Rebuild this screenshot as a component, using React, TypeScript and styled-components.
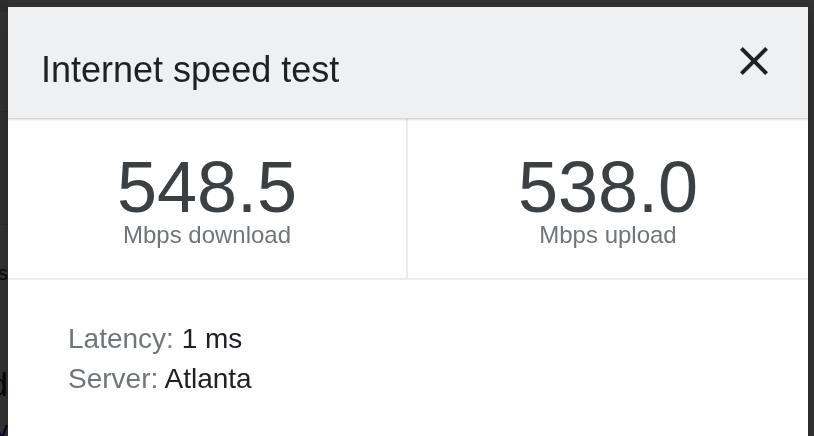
import React from "react";
import styled, { createGlobalStyle } from "styled-components";

const GlobalStyle = createGlobalStyle`
  html, body {
    margin: 0;
    padding: 0;
    background: #ffffff;
    overflow: hidden;
    font-family: "Liberation Sans", Arial, Helvetica, sans-serif;
  }
  * { box-sizing: border-box; }
`;

/* ---------- underlying page (only its left sliver is visible) ---------- */

const BehindPage = styled.div`
  width: 220px;
  margin-left: -212px;
  height: 436px;
  overflow: hidden;
  display: flex;
  flex-direction: column;
  text-align: right;
  white-space: nowrap;
  color: #202124;
`;

const BehindBar = styled.div<{ $h: number; $bg: string }>`
  height: ${(p) => p.$h}px;
  flex: 0 0 auto;
  background: ${(p) => p.$bg};
  border-bottom: 1px solid #e2e2e2;
`;

const BehindText = styled.div<{ $size: number; $top: number; $color?: string }>`
  margin-top: ${(p) => p.$top}px;
  font-size: ${(p) => p.$size}px;
  line-height: 1;
  color: ${(p) => p.$color ?? "#202124"};
`;

/* ---------- dialog ---------- */

const Overlay = styled.div`
  position: fixed;
  inset: 0;
  background: rgba(0, 0, 0, 0.8);
  display: flex;
  align-items: flex-start;
  padding: 7px 0 0 8px;
`;

const Dialog = styled.div`
  width: 800px;
  flex: 0 0 800px;
  background: #ffffff;
  display: flex;
  flex-direction: column;
  box-shadow: 0 4px 16px rgba(0, 0, 0, 0.3);
`;

const Header = styled.div`
  position: relative;
  z-index: 1;
  height: 112px;
  background: #eff0f2;
  border-bottom: 1px solid #d4d5d7;
  box-shadow: 0 1px 2px rgba(0, 0, 0, 0.12);
  display: flex;
  align-items: center;
  justify-content: space-between;
  padding: 14px 30px 0 33px;
`;

const Title = styled.h1`
  margin: 0;
  font-size: 36px;
  line-height: 36px;
  font-weight: 400;
  color: #202124;
`;

const CloseButton = styled.button`
  width: 48px;
  height: 48px;
  padding: 0;
  margin: 0 0 18px 0;
  border: none;
  background: transparent;
  color: #202124;
  display: flex;
  align-items: center;
  justify-content: center;
  cursor: pointer;
`;

const Stats = styled.div`
  display: grid;
  grid-template-columns: 1fr 1fr;
  border-bottom: 2px solid #ececec;
`;

const StatCell = styled.div<{ $divider?: boolean }>`
  display: flex;
  flex-direction: column;
  align-items: center;
  padding: 36px 0 31px;
  border-right: ${(p) => (p.$divider ? "2px solid #ececec" : "none")};
`;

const StatValue = styled.div`
  font-size: 72px;
  line-height: 64px;
  color: #3c4043;
`;

const StatLabel = styled.div`
  margin-top: 4px;
  font-size: 24px;
  line-height: 24px;
  color: #70757a;
`;

const Details = styled.div`
  display: flex;
  flex-direction: column;
  padding: 39px 59px 60px 60px;
`;

const DetailRow = styled.div`
  font-size: 28px;
  line-height: 40px;
  color: #202124;
`;

const DetailLabel = styled.span`
  color: #70757a;
`;

function CloseIcon() {
  return (
    <svg width="48" height="48" viewBox="0 0 24 24" aria-hidden="true">
      <path
        fill="currentColor"
        d="M19 6.41L17.59 5 12 10.59 6.41 5 5 6.41 10.59 12 5 17.59 6.41 19 12 13.41 17.59 19 19 17.59 13.41 12z"
      />
    </svg>
  );
}

export default function App() {
  return (
    <>
      <GlobalStyle />
      <BehindPage aria-hidden="true">
        <BehindBar $h={12} $bg="#dcdcdc" />
        <BehindBar $h={100} $bg="#ffffff" />
        <BehindBar $h={113} $bg="#f2f2f2" />
        <BehindText $size={20} $top={38}>Servers</BehindText>
        <BehindText $size={34} $top={84}>Download</BehindText>
        <BehindText $size={26} $top={16} $color="#1a0dab">Privacy</BehindText>
      </BehindPage>
      <Overlay>
        <Dialog role="dialog" aria-label="Internet speed test">
          <Header>
            <Title>Internet speed test</Title>
            <CloseButton aria-label="Close">
              <CloseIcon />
            </CloseButton>
          </Header>
          <Stats>
            <StatCell $divider>
              <StatValue>548.5</StatValue>
              <StatLabel>Mbps download</StatLabel>
            </StatCell>
            <StatCell>
              <StatValue>538.0</StatValue>
              <StatLabel>Mbps upload</StatLabel>
            </StatCell>
          </Stats>
          <Details>
            <DetailRow>
              <DetailLabel>Latency:</DetailLabel> 1 ms
            </DetailRow>
            <DetailRow>
              <DetailLabel>Server:</DetailLabel> Atlanta
            </DetailRow>
          </Details>
        </Dialog>
      </Overlay>
    </>
  );
}
